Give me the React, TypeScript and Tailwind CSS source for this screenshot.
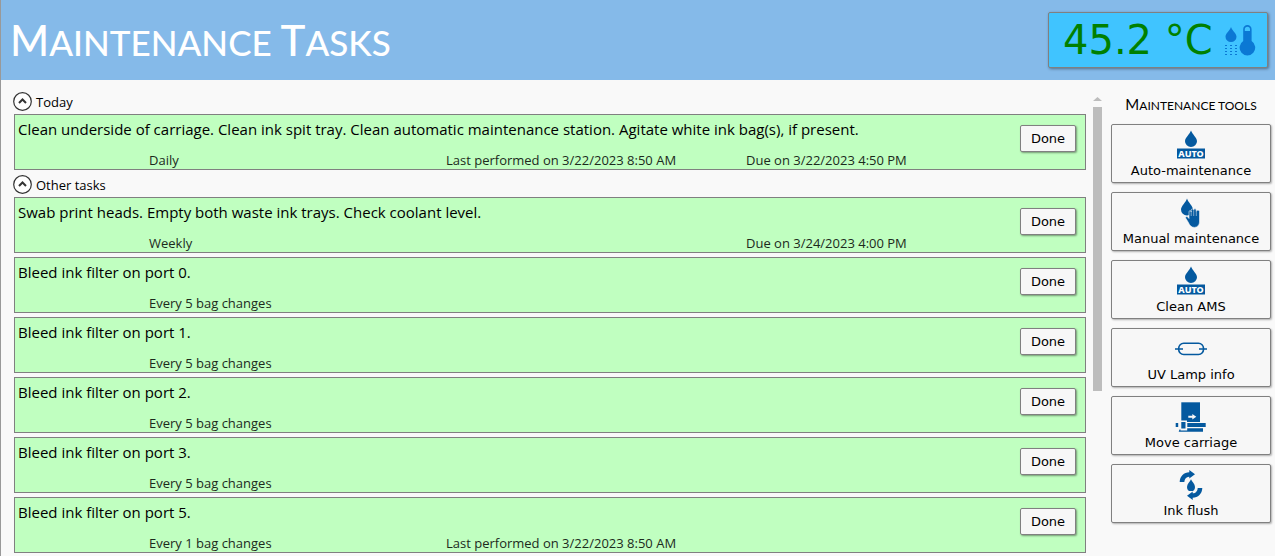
import type { ReactNode } from "react";

type Task = {
  title: string;
  interval: string;
  last?: string;
  due?: string;
};

const today: Task[] = [
  {
    title:
      "Clean underside of carriage. Clean ink spit tray. Clean automatic maintenance station. Agitate white ink bag(s), if present.",
    interval: "Daily",
    last: "Last performed on 3/22/2023 8:50 AM",
    due: "Due on 3/22/2023 4:50 PM",
  },
];

const others: Task[] = [
  {
    title: "Swab print heads. Empty both waste ink trays. Check coolant level.",
    interval: "Weekly",
    due: "Due on 3/24/2023 4:00 PM",
  },
  { title: "Bleed ink filter on port 0.", interval: "Every 5 bag changes" },
  { title: "Bleed ink filter on port 1.", interval: "Every 5 bag changes" },
  { title: "Bleed ink filter on port 2.", interval: "Every 5 bag changes" },
  { title: "Bleed ink filter on port 3.", interval: "Every 5 bag changes" },
  {
    title: "Bleed ink filter on port 5.",
    interval: "Every 1 bag changes",
    last: "Last performed on 3/22/2023 8:50 AM",
  },
];

const Icon = ({ children }: { children: ReactNode }) => (
  <svg
    viewBox="0 0 32 32"
    className="size-8 shrink-0 fill-[#04599f]"
    aria-hidden="true"
  >
    {children}
  </svg>
);

const AutoIcon = () => (
  <Icon>
    <path d="M16 1.5C17.2 5.2 22 8.6 22 12.2a6 5.8 0 0 1-12 0C10 8.6 14.8 5.2 16 1.5Z" />
    <path d="M2 19.5h28v10H2z" />
    <text
      x="16"
      y="27.8"
      textAnchor="middle"
      className="fill-white font-['Noto_Sans',sans-serif] text-[9px] font-extrabold"
    >
      AUTO
    </text>
  </Icon>
);

const ManualIcon = () => (
  <Icon>
    <path d="M12 1.5C13.2 5.5 18 9 18 12.6a6 6 0 0 1-12 0C6 9 10.8 5.5 12 1.5Z" />
    <path
      className="stroke-[#f7f7f7]"
      strokeWidth="0.6"
      d="M13.4 25.5 10.8 21.3c-.8-1.5 1-2.5 2-1.3l1.2 1.5V14.8c0-1.6 2.1-1.6 2.2 0v-1.6c0-1.7 2.4-1.7 2.5 0v-.2c0-1.7 2.4-1.7 2.5 0v1.2c.1-1.4 3.3-1.4 3.3.4V25c0 3-2 5.4-5.2 5.4-3 0-4.6-1.8-5.9-4.9Z"
    />
    <path
      className="fill-none stroke-[#f7f7f7]"
      strokeWidth="0.5"
      d="M16.2 14v5M18.7 13.5V19M21.3 14v5"
    />
  </Icon>
);

const LampIcon = () => (
  <Icon>
    <g className="fill-none stroke-[#04599f]" strokeWidth="1.6">
      <rect x="3.7" y="10.3" width="24.8" height="11.2" rx="5" />
      <path d="M0 16h8M24 16h8" />
    </g>
  </Icon>
);

const CarriageIcon = () => (
  <Icon>
    <path d="M6.3 1.3H25V21H6.3z" />
    <path
      className="fill-[#f7f7f7]"
      d="M13.3 14.8h4v-1.7l4 2.7-4 2.7v-1.7h-4zM5 19.5h7V21h19v1H12v4h19v1H12v2.5H5z"
    />
    <path d="M.7 22h2.5v4H.7zM6.3 21h4.2v6.5H6.3zM12.3 22h18.4v4H12.3zM3.7 30.8l.8-2.3h1v1h6.7v-2.2H28v3.5z" />
  </Icon>
);

const FlushIcon = () => (
  <Icon>
    <path d="M16 10.3c.8 2.3 4 4.8 4 7.6a4 4.2 0 0 1-8 0c0-2.8 3.2-5.3 4-7.6Z" />
    <path
      id="flush-arrow"
      d="M4.7 13C4.8 7.3 9 3.3 14.3 3.3V.9l5.7 4.4-5.7 4.3V7.7C11.5 7.5 9.5 9.7 9.3 13Z"
    />
    <use href="#flush-arrow" transform="rotate(180 16 16)" />
  </Icon>
);

const TemperatureIcon = () => (
  <svg
    viewBox="0 0 32 32"
    className="size-8 shrink-0 fill-[#0b78d4]"
    aria-hidden="true"
  >
    <path d="M7 3c1 3.4 5.5 6.4 5.5 9.7a5.5 5.3 0 0 1-11 0C1.5 9.4 6 6.4 7 3Z" />
    <path
      className="fill-none stroke-[#0b78d4]"
      strokeWidth="1"
      strokeDasharray="2 3"
      d="M1 21.5h12M1 24.5h12M1 27.5h12M1 30.5h12"
    />
    <path d="M19.2 5.2a4.2 4.2 0 0 1 8.4 0v11.9a7.8 7.8 0 1 1-8.4 0z" />
    <path
      className="fill-[#40c4ff]"
      d="M20.8 5.4a2.6 2.6 0 0 1 5.2 0V7h-5.2z"
    />
  </svg>
);

const tools = [
  { label: "Auto-maintenance", icon: <AutoIcon /> },
  { label: "Manual maintenance", icon: <ManualIcon /> },
  { label: "Clean AMS", icon: <AutoIcon /> },
  { label: "UV Lamp info", icon: <LampIcon /> },
  { label: "Move carriage", icon: <CarriageIcon /> },
  { label: "Ink flush", icon: <FlushIcon /> },
];

const TaskCard = ({ task }: { task: Task }) => (
  <li className="flex h-14 items-start justify-between border border-[#808080] bg-[#c0ffc0] pl-[3px] pr-[9px]">
    <div className="min-w-0 flex-1 whitespace-nowrap">
      <h3 className="mt-[3px] text-[15px] leading-[22px]">{task.title}</h3>
      <div className="mt-3 grid grid-cols-[297px_300px_1fr] pl-[131px] text-[13px] leading-4 text-[#1c2a1c]">
        <span>{task.interval}</span>
        <span>{task.last}</span>
        <span>{task.due}</span>
      </div>
    </div>
    <button
      type="button"
      className="mt-[10px] h-[27px] w-14 rounded-xs border border-[#808080] bg-[#f7f7f7] font-['DejaVu_Sans',sans-serif] text-[13px] shadow-[1px_1px_2px_rgba(0,0,0,0.4)]"
    >
      Done
    </button>
  </li>
);

const TaskGroup = ({ name, tasks }: { name: string; tasks: Task[] }) => (
  <section>
    <h2>
      <button
        type="button"
        aria-expanded="true"
        className="flex h-[27px] items-center gap-1 pt-[2px] text-[13px] leading-4"
      >
        <svg
          viewBox="0 0 19 19"
          className="-ml-px size-[19px] fill-white stroke-[#333]"
          aria-hidden="true"
        >
          <circle cx="9.5" cy="9.5" r="8.8" strokeWidth="1.2" />
          <path d="m6 11 3.5-3.5L13 11" fill="none" strokeWidth="2" />
        </svg>
        {name}
      </button>
    </h2>
    <ul className="flex flex-col gap-1">
      {tasks.map((task) => (
        <TaskCard key={task.title} task={task} />
      ))}
    </ul>
  </section>
);

export default function App() {
  return (
    <div className="flex min-h-screen flex-col border-l border-[#999] bg-[#f9f9f9] font-['Open_Sans',sans-serif] text-black">
      <header className="flex h-20 items-center justify-between bg-[#85bae9] pl-[9px] pr-[7px]">
        <h1 className="font-['Lato',sans-serif] text-[35px] leading-none font-medium text-white">
          <span className="text-[42px]">M</span>
          <span className="uppercase">aintenance</span>{" "}
          <span className="text-[42px]">T</span>
          <span className="uppercase">asks</span>
        </h1>
        <button
          type="button"
          className="flex h-14 w-[220px] items-center justify-between rounded-xs border border-[#808080] bg-[#40c4ff] pl-[14px] pr-[11px] font-['DejaVu_Sans',sans-serif] text-[40px] text-[#008000] shadow-[1px_1px_3px_rgba(0,0,0,0.4)]"
        >
          45.2 °C
          <TemperatureIcon />
        </button>
      </header>

      <main className="flex flex-1">
        <div className="min-w-0 flex-1 pl-[13px] pt-[7px]">
          <TaskGroup name="Today" tasks={today} />
          <TaskGroup name="Other tasks" tasks={others} />
        </div>
        <div
          className="flex w-[23px] flex-col items-center gap-[6px] pt-[17px]"
          aria-hidden="true"
        >
          <svg viewBox="0 0 9 4" className="h-1 w-[9px] fill-[#bdbdbd]">
            <path d="M0 4 4.5 0 9 4z" />
          </svg>
          <div className="h-[284px] w-[9px] bg-[#bdbdbd]" />
        </div>
        <aside className="w-[166px] pl-[2px] pr-1 pt-4">
          <h2 className="mb-[10px] text-center font-['Lato',sans-serif] text-xs leading-4">
            <span className="text-[15px]">M</span>
            <span className="uppercase">aintenance tools</span>
          </h2>
          <div className="flex flex-col gap-[9px]">
            {tools.map((tool) => (
              <button
                key={tool.label}
                type="button"
                className="flex h-[59px] flex-col items-center rounded-xs border border-[#808080] bg-[#f7f7f7] pt-1 font-['DejaVu_Sans',sans-serif] text-[13px] leading-5 shadow-[1px_1px_2px_rgba(0,0,0,0.3)]"
              >
                {tool.icon}
                <span className="whitespace-nowrap">{tool.label}</span>
              </button>
            ))}
          </div>
        </aside>
      </main>
    </div>
  );
}
